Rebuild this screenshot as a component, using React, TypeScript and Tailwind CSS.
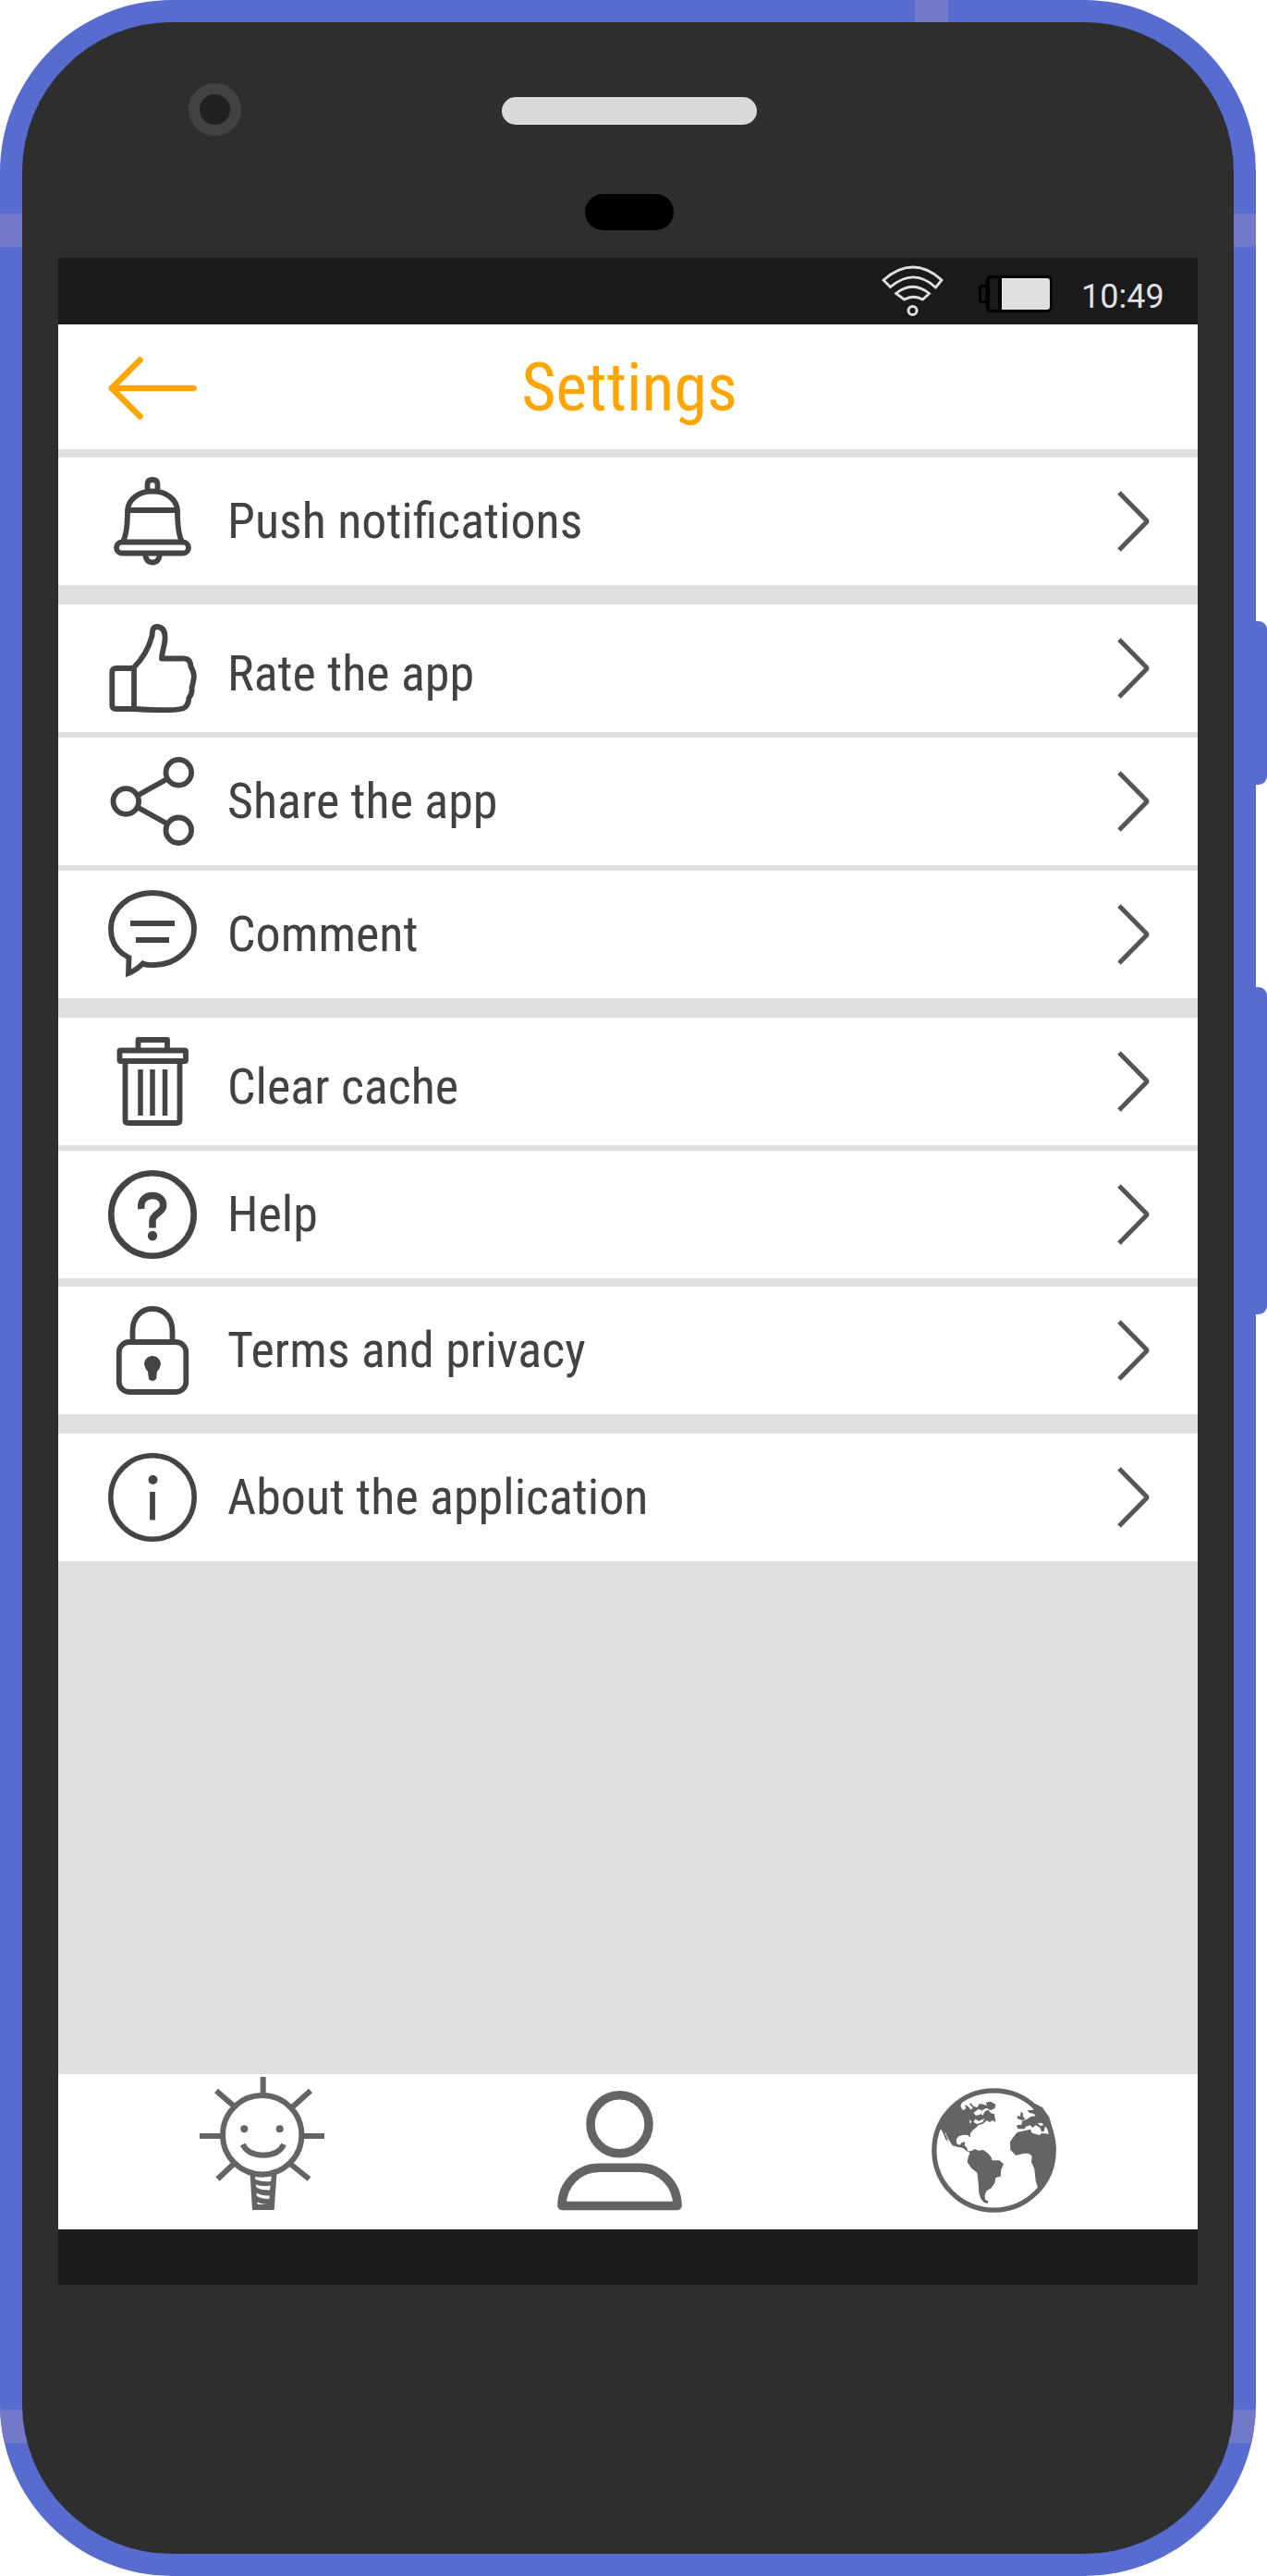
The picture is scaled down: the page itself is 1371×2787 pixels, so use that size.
import type { ReactNode } from "react";

function Icon({ children }: { children: ReactNode }) {
  return (
    <svg
      viewBox="0 0 96 96"
      className="size-24 shrink-0"
      fill="none"
      stroke="#444444"
      strokeWidth="5.800"
      strokeLinejoin="round"
    >
      {children}
    </svg>
  );
}

const BellIcon = () => (
  <Icon>
    <path d="M42.500 15V8Q42.500 3 48 3T53.500 8V15" />
    <path d="M16.500 69Q21 60 21 36C22 25 32 15.500 48 15.500S74 25 75 36Q75 60 79.500 69" />
    <path d="M21 36H75" />
    <rect x="9" y="70.500" width="78" height="12" rx="6" />
    <path d="M40 83Q41 92.500 48 92.500T56 83" />
  </Icon>
);

const ThumbIcon = () => (
  <Icon>
    <path d="M28 48H9Q4.300 48 4.300 52V88Q4.300 92 9 92H28Z" />
    <path d="M28 47C36 39 44 26 47.500 13C48 5 49 3 53 3C60 3.500 62 9 61.500 17C61 25 58 30 58 37.500H80Q89 37 89.500 46Q94 54 92.500 60Q91.500 66 90.500 69Q91.500 75 87.500 80Q86.500 91 79 92Q66 94.500 28 92" />
  </Icon>
);

const ShareIcon = () => (
  <Icon>
    <circle cx="19.300" cy="48" r="13.800" />
    <circle cx="76.300" cy="16.700" r="13.800" />
    <circle cx="76.300" cy="79.300" r="13.800" />
    <path d="M32 41.500L63.500 24M32 54.500L63.500 72" />
  </Icon>
);

const CommentIcon = () => (
  <Icon>
    <path
      d="M22.500 73C10 67 3 56 3 42C3 20 23 3 48 3S93 20 93 42S73 81 50 81Q42 81.500 37.500 79.500Q30 87 22 90Z"
      strokeLinejoin="miter"
    />
    <path d="M24 36H72M30 54H66" strokeWidth="6" />
  </Icon>
);

const TrashIcon = () => (
  <Icon>
    <path d="M32.500 14V3H64V14" />
    <rect x="12.500" y="14.500" width="71.500" height="11.500" rx="1" />
    <path d="M18.500 27V90Q18.500 93 22 93H74Q77.500 93 77.500 90V27" />
    <path d="M35 35V85M48 35V85M61.500 35V85" strokeWidth="5.500" />
  </Icon>
);

const HelpIcon = () => (
  <Icon>
    <circle cx="48" cy="48" r="44.700" strokeWidth="6.600" />
    <path d="M36 42C34.500 33 40 27.500 48 27.500S60.500 33 59.500 39.500C58 47 48 47 48 55V62.500" strokeWidth="7.500" />
    <circle cx="48" cy="71" r="5.200" fill="#444444" stroke="none" />
  </Icon>
);

const LockIcon = () => (
  <Icon>
    <rect x="11.800" y="39" width="72.500" height="54" rx="11" />
    <path d="M26.500 38V27C26.500 13 35 3 48 3S69.500 13 69.500 27V38" />
    <path
      d="M48 54C53 54 57 58 57 63Q56 68 53 71L52 79Q48 83 44 79L43 71Q40 68 39 63C39 58 43 54 48 54Z"
      fill="#444444"
      stroke="none"
    />
  </Icon>
);

const InfoIcon = () => (
  <Icon>
    <circle cx="48" cy="48" r="45.200" strokeWidth="5.500" />
    <circle cx="48.500" cy="29" r="5" fill="#444444" stroke="none" />
    <path d="M48 42V72.500" />
  </Icon>
);

function Row({ icon, label, low }: { icon: ReactNode; label: string; low?: boolean }) {
  return (
    <div className="flex h-[138px] shrink-0 items-center bg-white pr-[51px] pl-[54px]">
      {icon}
      <span
        className={
          low
            ? "ml-[33px] pt-3 text-[54px] leading-none whitespace-nowrap"
            : "ml-[33px] text-[54px] leading-none whitespace-nowrap"
        }
      >
        {label}
      </span>
      <svg
        viewBox="0 0 36 66"
        className="ml-auto h-[66px] w-9"
        fill="none"
        stroke="#555555"
        strokeWidth="5"
        strokeLinejoin="bevel"
      >
        <path d="M2 2L32.500 33L2 64" />
      </svg>
    </div>
  );
}

function StatusBar() {
  return (
    <div className="flex h-[72px] shrink-0 items-start bg-[#1a1a1a] pl-[891px] text-[#e0e0e0]">
      <svg viewBox="0 0 68 58" className="mt-[7px] h-[58px] w-[68px]" fill="none" stroke="#e0e0e0" strokeWidth="2.800">
        <path d="M2 17Q34 -11 65 17L58.500 25Q35 3 9.500 24.500Z" />
        <path d="M15.500 31.500Q33.500 17 51.500 31.500L44.500 38Q34.500 32.500 24.500 38Z" />
        <circle cx="33.500" cy="50" r="4.600" strokeWidth="3" />
      </svg>
      <svg viewBox="0 0 84 46" className="mt-4 ml-[35px] h-[46px] w-[84px]">
        <rect x="3.500" y="14.500" width="8" height="17" rx="2" fill="#1a1a1a" stroke="#000" strokeWidth="3" />
        <rect x="9.500" y="3" width="72" height="40" rx="6" fill="#000" />
        <rect x="14" y="6" width="9" height="34" fill="#1a1a1a" />
        <path d="M27 6H76Q79 6 79 9V37Q79 40 76 40H27Z" fill="#e0e0e0" />
      </svg>
      <span className="mt-[24px] ml-[29px] text-[36px] leading-[36px] [font-stretch:100%]">10:49</span>
    </div>
  );
}

function BulbIcon() {
  return (
    <svg viewBox="0 0 135 144" className="h-36 w-[135px]" fill="none" stroke="#646464" strokeWidth="6">
      <circle cx="67.700" cy="62.700" r="42.700" />
      <path d="M68.700 0V18M0 64H24M112 64H135M18 15L37 31.500M120 15L100 33M19.500 110.500L37 94M118.500 110.500L98 94" />
      <path d="M46.700 73Q52 84.500 69 84.700Q86 84.500 91 73" />
      <g stroke="none">
        <circle cx="48.300" cy="56.300" r="4" fill="#646464" />
        <circle cx="86.700" cy="56.300" r="4" fill="#646464" />
        <path d="M54.500 104H83.500L80.700 144H57Z" fill="#646464" />
        <path
          d="M60 108Q69 109.500 78 107.500L77 113Q68 114 60.500 111ZM61 116.500Q67 119 76.500 117.500L76 122.500Q65 122.500 61 119ZM61.700 125.500Q67 129 75.700 128.500L75.300 132Q65 131.500 61.700 128.700ZM62.500 135.500Q67 137.500 75 138H62.500Z"
          fill="#fff"
        />
      </g>
    </svg>
  );
}

function UserIcon() {
  return (
    <svg
      viewBox="0 0 135 130"
      className="mt-[15px] h-[130px] w-[135px]"
      fill="none"
      stroke="#646464"
      strokeWidth="9.500"
      strokeLinejoin="round"
    >
      <circle cx="67.500" cy="36.300" r="31.500" />
      <path d="M5 124.500C5 101 23 83.200 46 83.200H89C112 83.200 130 101 130 124.500Z" />
    </svg>
  );
}

function GlobeIcon() {
  return (
    <svg viewBox="24 21 405 405" className="mt-3 size-[135px]" fill="#646464">
      <circle cx="226.500" cy="223.500" r="194" fill="none" stroke="#646464" strokeWidth="16" />
      <path
        fillRule="evenodd"
        d="M38 158L56 122L80 92L106 70L124 64L118 80L126 94L136 88L132 76L142 80L152 92L158 84L148 76L150 68L160 80L172 84L180 72L192 74L204 78L200 68L216 65L232 74L230 86L216 94L202 86L190 92L184 104L190 110L198 96L208 92L216 102L228 106L232 132L222 126L212 132L204 126L190 138L178 140L168 150L158 158L150 168L149 182L142 174L128 173L112 178L104 188L106 202L116 206L122 198L133 196L131 208L138 214L142 226L154 226L150 232L138 226L126 216L108 212L92 208L84 196L78 186L70 168L66 164L74 182L78 194L70 188L62 168L54 154ZM146 124L154 130L150 138ZM160 102L176 90L188 94L182 108L168 110ZM166 122L178 128L196 120L190 132L172 138L160 132Z"
      />
      <path d="M150 228L164 219L176 224L192 222L208 234L218 246L220 256L244 256L258 268L250 286L248 308L232 312L230 328L218 346L203 355L197 368L198 384L208 388L206 396L194 392L184 380L178 362L176 330L172 296L154 282L140 262L143 246Z" />
      <path d="M302 165L345 155L350 167L374 174L382 168L420 172L428 215L420 265L402 310L370 348L362 322L358 284L348 262L350 242L340 234L325 233L298 240L280 222L279 196L290 180Z" />
      <path
        fillRule="evenodd"
        d="M335 94L354 92L364 82L360 72L384 84L406 116L420 164L414 172L404 168L402 152L392 146L390 160L382 164L376 150L362 142L352 150L344 142L330 146L326 154L304 154L300 142L316 140L318 128L334 122L346 114L362 112L356 104L342 102ZM368 136L382 134L388 142L378 144Z"
      />
      <path d="M314 98L322 104L320 112L328 122L318 126L302 120L304 110L312 114Z" />
    </svg>
  );
}

export default function App() {
  return (
    <div className="relative h-[2787px] w-[1371px] overflow-hidden bg-white font-['Roboto',sans-serif] text-[#424242] [font-stretch:75%]">
      <div className="absolute top-[672px] left-[1341px] h-[177px] w-[30px] rounded-r-[9px] bg-[#586ccf]" />
      <div className="absolute top-[1068px] left-[1341px] h-[354px] w-[30px] rounded-r-[9px] bg-[#586ccf]" />

      <div className="relative h-[2787px] w-[1359px] overflow-hidden rounded-[186px] bg-[#586ccf] p-6">
        <div className="absolute top-0 left-[990px] h-10 w-9 bg-[#7379c9]" />
        <div className="absolute top-[231px] left-0 h-9 w-full bg-[#7379c9]" />
        <div className="absolute top-[2607px] left-0 h-9 w-full bg-[#7379c9]" />

        <div className="relative flex h-[2739px] w-[1311px] flex-col rounded-[162px] bg-[#2e2e2e] px-[39px]">
          <div className="h-[255px] shrink-0 pt-[66px]">
            <div className="flex h-[57px] items-start pl-[141px]">
              <div className="size-[57px] rounded-full border-[12px] border-[#424242] bg-[#212121]" />
              <div className="mt-[15px] ml-[282px] h-[30px] w-[276px] rounded-full bg-[#d9d9d9]" />
            </div>
            <div className="mt-[63px] ml-[570px] h-[39px] w-24 rounded-full bg-black" />
          </div>

          <StatusBar />

          <header className="flex h-[135px] shrink-0 items-center bg-white px-[54px]">
            <svg
              viewBox="0 0 96 72"
              className="mt-[3px] h-[72px] w-24"
              fill="none"
              stroke="#ffa500"
              strokeWidth="6.600"
              strokeLinecap="round"
              strokeLinejoin="round"
            >
              <path d="M4 36H92.500" />
              <path d="M34.500 5.500L4 36L34.500 66.500" />
            </svg>
            <h1 className="grow pt-[2px] pl-[3px] text-center text-[72px] leading-none text-[#ffa500]">Settings</h1>
            <div className="w-24" />
          </header>

          <main className="flex h-[1758px] shrink-0 flex-col bg-[#e0e0e0] pt-[9px]">
            <Row icon={<BellIcon />} label="Push notifications" />
            <section className="mt-[21px] flex flex-col gap-[6px]">
              <Row icon={<ThumbIcon />} label="Rate the app" low />
              <Row icon={<ShareIcon />} label="Share the app" />
              <Row icon={<CommentIcon />} label="Comment" />
            </section>
            <section className="mt-[21px] flex flex-col gap-[6px]">
              <Row icon={<TrashIcon />} label="Clear cache" low />
              <Row icon={<HelpIcon />} label="Help" />
            </section>
            <section className="mt-[9px]">
              <Row icon={<LockIcon />} label="Terms and privacy" />
            </section>
            <section className="mt-[21px]">
              <Row icon={<InfoIcon />} label="About the application" />
            </section>
          </main>

          <nav className="flex h-[168px] shrink-0 items-start bg-white pt-[3px] pl-[153px]">
            <BulbIcon />
            <div className="ml-[252px]">
              <UserIcon />
            </div>
            <div className="ml-[270px]">
              <GlobeIcon />
            </div>
          </nav>
          <div className="h-[60px] shrink-0 bg-[#1a1a1a]" />
        </div>
      </div>
    </div>
  );
}
